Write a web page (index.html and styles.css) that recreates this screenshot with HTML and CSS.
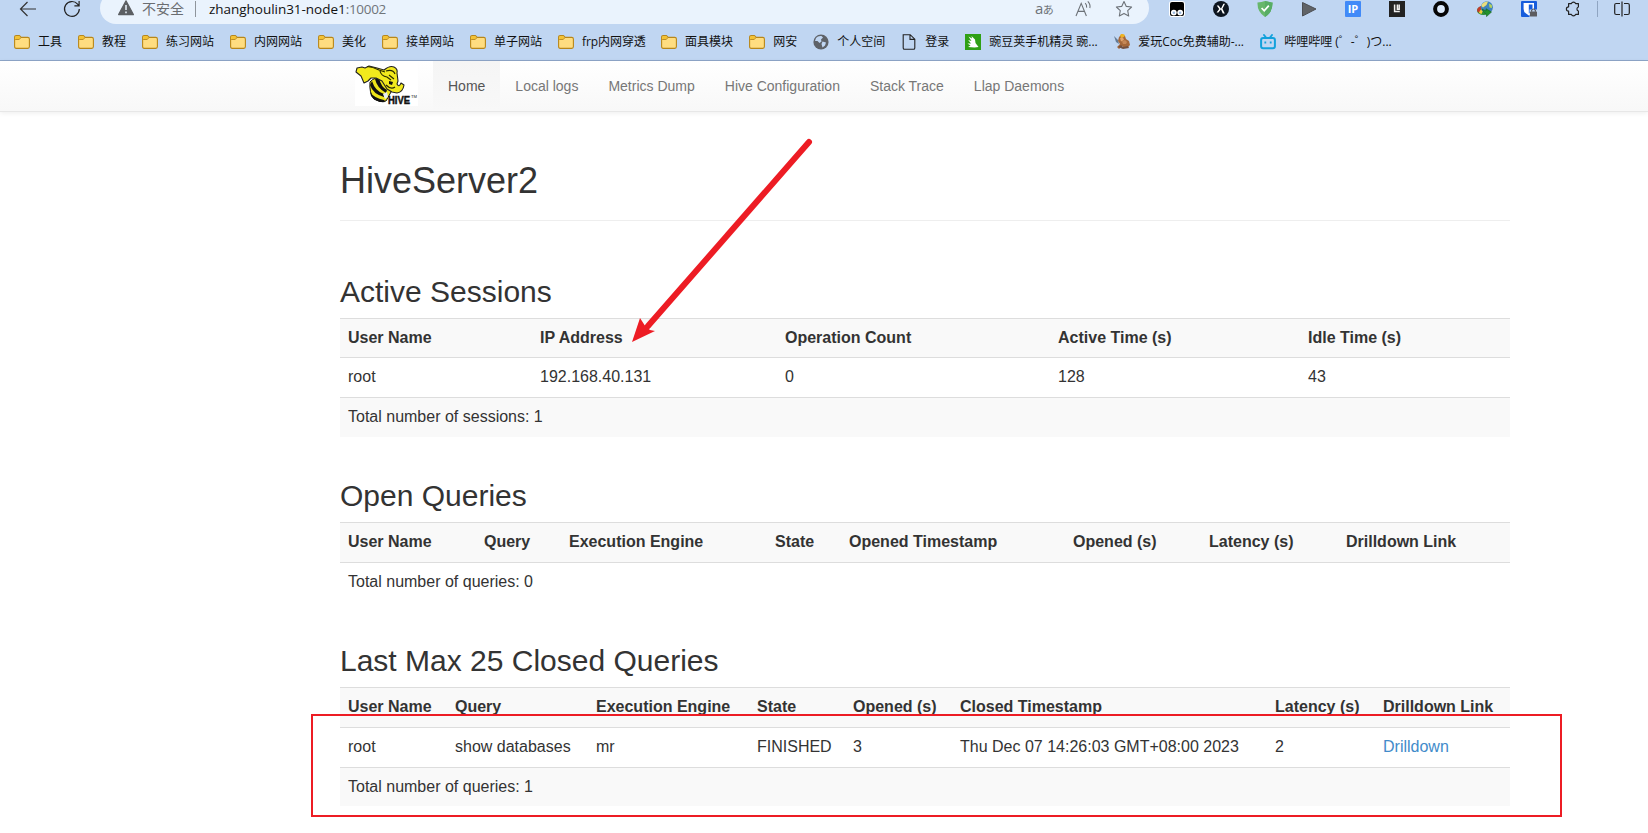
FILE: index.html
```html
<!DOCTYPE html>
<html lang="zh-CN">
<head>
<meta charset="utf-8">
<title>HiveServer2</title>
<link rel="stylesheet" href="styles.css">
</head>
<body>
<svg class="defs" width="0" height="0" aria-hidden="true">
  <symbol id="folder" viewBox="0 0 16 16">
    <path d="M.6 3.2Q.6 1.6 2.2 1.6H5.4L7.2 3.4H13.8Q15.4 3.4 15.4 5V12.6Q15.4 14.4 13.8 14.4H2.2Q.6 14.4 .6 12.6Z" fill="#ffdd80" stroke="#b8871a" stroke-width="1.1"/>
    <path d="M1.2 5.3V3.2Q1.2 2.2 2.2 2.2H5.2L6.6 3.6 5 5.3Z" fill="#f4c22f"/>
    <path d="M1.2 5.5H5L7 3.7" fill="none" stroke="#b8871a" stroke-width=".9"/>
  </symbol>
</svg>

<header class="browser">
  <div class="toolbar">
    <svg class="back" width="18" height="18" viewBox="0 0 18 18"><path d="M17 9H1.5M8.5 2L1.5 9l7 7" fill="none" stroke="#333" stroke-width="1.2"/></svg>
    <svg class="reload" width="18" height="18" viewBox="0 0 18 18"><path d="M16.3 9A7.4 7.4 0 1 1 14.6 4.2L16 5.8M16.1 1V5.9H11.4" fill="none" stroke="#222" stroke-width="1.2"/></svg>
    <div class="address">
      <svg class="warn" width="16" height="16" viewBox="0 0 16 16"><path d="M8 .8L15.4 14.6H.6Z" fill="#5c5f63" stroke="#5c5f63" stroke-width="1.2" stroke-linejoin="round"/><path d="M8 5V10M8 11.5V13.2" stroke="#eaf3fd" stroke-width="1.5"/></svg>
      <span class="insecure">不安全</span>
      <span class="divider"></span>
      <span class="url">zhanghoulin31-node1<span class="port">:10002</span></span>
      <span class="translate">a<small>あ</small></span>
      <svg class="read" width="18" height="18" viewBox="0 0 18 18"><path d="M1 16L6.2 3.4 11.4 16M3 11.4H9.5M10.2 3.2Q12 5 11.6 7.6M12.8 1.4Q15.8 4.4 14.8 8" fill="none" stroke="#6d7278" stroke-width="1.1"/></svg>
      <svg class="star" width="18" height="18" viewBox="0 0 18 18"><path d="M9 1.5L11.3 6.4 16.6 7 12.7 10.7 13.7 16 9 13.4 4.3 16 5.3 10.7 1.4 7 6.7 6.4Z" fill="none" stroke="#6d7278" stroke-width="1.1" stroke-linejoin="round"/></svg>
    </div>
    <div class="extensions">
      <svg width="16" height="16" viewBox="0 0 16 16"><rect width="16" height="16" rx="3" fill="#fff"/><path d="M1 3Q1 1 3 1H13Q15 1 15 3V11H1Z" fill="#000"/><rect x="1" y="9" width="14" height="6" rx="2" fill="#000"/><circle cx="4.8" cy="11.6" r="2.9" fill="#fff"/><circle cx="11.2" cy="11.6" r="2.9" fill="#fff"/><circle cx="4.9" cy="11.8" r="1.3" fill="#9dbbe0"/><circle cx="11.1" cy="11.8" r="1.3" fill="#9dbbe0"/></svg>
      <svg width="16" height="16" viewBox="0 0 16 16"><circle cx="8" cy="8" r="8" fill="#0d151f"/><path d="M3.8 4.5H5.6L8.2 8 5.4 11.6H3.6L6.2 8Z" fill="#fff"/><path d="M10.4 2.8H12L9.4 7.8 11.8 12.6H9.8L7.8 8Z" fill="#fff"/></svg>
      <svg width="16" height="16" viewBox="0 0 16 16"><path d="M8 0Q11.5 1 15.5 1.5Q16 11 8 16Q0 11 .5 1.5Q4.5 1 8 0Z" fill="#67b76b"/><path d="M8 0Q11.5 1 15.5 1.5Q16 11 8 16Z" fill="#58ad65"/><path d="M4.6 7L7.2 9.8 11.8 4.6" fill="none" stroke="#fff" stroke-width="1.7"/></svg>
      <svg width="16" height="16" viewBox="0 0 16 16"><path d="M1.5 1.5L15 8 1.5 15Z" fill="#606367" stroke="#4c4f54"/></svg>
      <svg width="16" height="16" viewBox="0 0 16 16"><rect width="16" height="16" rx="1" fill="#418af8"/><text class="ip-text" x="8" y="12.2" text-anchor="middle">IP</text></svg>
      <svg width="16" height="16" viewBox="0 0 16 16"><rect width="16" height="16" fill="#222"/><path d="M5.6 3.4V10.6H10.8M8.4 3.4V8.2H10.2V3.4" fill="none" stroke="#eee" stroke-width="1.5"/></svg>
      <svg width="16" height="16" viewBox="0 0 16 16"><circle cx="8" cy="8" r="5.9" fill="#dceafb" stroke="#050505" stroke-width="4"/></svg>
      <svg width="16" height="16" viewBox="0 0 16 16"><ellipse cx="6.5" cy="9.5" rx="6.5" ry="4.5" fill="#2f8f35"/><path d="M0 9Q1 5 6 5L6 8Q3 8 2.5 12Q0 11 0 9Z" fill="#c23c2c"/><path d="M2 12Q2.5 8 7 7.5L7 10Q5 10.5 4.5 13Z" fill="#f0cf35"/><circle cx="9.9" cy="6.3" r="6" fill="#3f83bd"/><path d="M5 3Q7.5 0 11 .6L9.5 4 6 6.5 4.3 5Z" fill="#e9dc7b"/><path d="M12 2.5L14.8 4 15 7 12.5 6.5Z" fill="#b7d25b"/><path d="M5 8L9 10V7.8L14.5 11 9.5 15.6V13.4Q6.5 12 5 8Z" fill="#22912c" stroke="#14611c" stroke-width=".6"/></svg>
      <svg width="16" height="16" viewBox="0 0 16 16"><rect width="16" height="16" rx="1" fill="#175ddc"/><path d="M2.6 2H13V8Q13 12 7.8 14.5Q2.6 12 2.6 8Z" fill="#fff"/><path d="M7.8 3.5H11.5V8Q11.5 11 7.8 12.6Z" fill="#175ddc"/><rect x="8.5" y="8.5" width="7.5" height="7.5" fill="#c0d6f2"/><rect x="9" y="10.5" width="7" height="5" rx=".6" fill="#5c5c60"/><path d="M10.6 10.8V9.4Q12.5 6.6 14.4 9.4V10.8" fill="none" stroke="#5c5c60" stroke-width="1.2"/></svg>
      <svg width="16" height="16" viewBox="0 0 16 16"><path d="M3.6 2.6H6.4A2.2 2.2 0 0 1 10.6 2.6H13.4V6A2.1 2.1 0 0 0 13.4 10V13.4H10.6A2.2 2.2 0 0 1 6.4 13.4H3.6V10.2A2.2 2.2 0 0 1 3.6 5.8Z" fill="none" stroke="#222" stroke-width="1.2" stroke-linejoin="round"/></svg>
      <span class="divider ext-divider"></span>
      <svg width="16" height="16" viewBox="0 0 16 16"><path d="M6 2.5H2.2Q.7 2.5 .7 4V12Q.7 13.5 2.2 13.5H6M10 2.5H13.8Q15.3 2.5 15.3 4V12Q15.3 13.5 13.8 13.5H10M8 .5V15.5" fill="none" stroke="#222" stroke-width="1.2"/></svg>
    </div>
  </div>
  <nav class="bookmarks">
    <span class="bm"><svg><use href="#folder"/></svg>工具</span>
    <span class="bm"><svg><use href="#folder"/></svg>教程</span>
    <span class="bm"><svg><use href="#folder"/></svg>练习网站</span>
    <span class="bm"><svg><use href="#folder"/></svg>内网网站</span>
    <span class="bm"><svg><use href="#folder"/></svg>美化</span>
    <span class="bm"><svg><use href="#folder"/></svg>接单网站</span>
    <span class="bm"><svg><use href="#folder"/></svg>单子网站</span>
    <span class="bm bm-frp"><svg><use href="#folder"/></svg>frp内网穿透</span>
    <span class="bm"><svg><use href="#folder"/></svg>面具模块</span>
    <span class="bm"><svg><use href="#folder"/></svg>网安</span>
    <span class="bm"><svg viewBox="0 0 16 16"><circle cx="8" cy="8" r="7.6" fill="#5e6268"/><path d="M3 4Q5 1.5 8.5 2L10 3.5 8 5.5 8.5 7.5 6.5 9 4.5 7 2 7ZM9.5 7.5L13 8.5 12 11.5 9.5 13.5 8.5 10Z" fill="#c0d6f2"/></svg>个人空间</span>
    <span class="bm"><svg viewBox="0 0 16 16"><path d="M2.2 .7H9.2L13.8 5.2V14Q13.8 15.3 12.5 15.3H3.5Q2.2 15.3 2.2 14ZM9 .8V5.4H13.7" fill="none" stroke="#222" stroke-width="1.1"/></svg>登录</span>
    <span class="bm bm-pea"><svg viewBox="0 0 16 16"><rect width="16" height="16" fill="#2fa015"/><path d="M3.5 2.5L7 4.5 6.5 2 10 5.5 10.5 9 13.5 13 9.5 13.5 3 13 5.5 11.5 2.5 9.5 6 9.5 3.2 6 6.5 7Z" fill="#fff"/></svg>豌豆荚手机精灵 豌...</span>
    <span class="bm bm-coc"><svg viewBox="0 0 16 16"><path d="M0 2L4 6 5 10 2 8Z" fill="#647b94"/><path d="M5 3L8 0 11 2 12 5 15 7 16 11 13 14H10L8 12 5 15 3 13 6 10 4 7Z" fill="#a56739"/><path d="M6 1L8-.5 11 1 10 3 7 4Z" fill="#eeb323"/><path d="M6 4L9 3.5 10 6 7 7.5Z" fill="#e1a36d"/><path d="M8 7.5L11 6 13 8 12 10 9 10Z" fill="#c58756"/><path d="M4 13L7 11 9 13 14 12 15 14 9 15Z" fill="#74503f"/></svg>爱玩Coc免费辅助-...</span>
    <span class="bm bm-bili"><svg viewBox="0 0 16 16"><rect x="1.1" y="4" width="13.8" height="10.3" rx="2" fill="none" stroke="#12a1dc" stroke-width="2"/><path d="M4 1L6 3.5M12 1L10 3.5" stroke="#12a1dc" stroke-width="1.9" stroke-linecap="round"/><path d="M5.3 7.5V9.6M10.7 7.5V9.6" stroke="#12a1dc" stroke-width="1.8"/></svg>哔哩哔哩 (゜-゜)つ...</span>
  </nav>
</header>

<nav class="navbar">
  <div class="nav-inner">
    <svg class="logo" width="63" height="45" viewBox="0 0 63 45">
      <rect width="63" height="45" fill="#fff"/>
      <path d="M15 21Q20 15 27 18L35 23 36 31 31 40Q25 42 19 38 14 32 15 21Z" fill="#eee51a" stroke="#111"/>
      <path d="M15 24Q18 33 29 36L29 33Q20 30 17 20ZM20 18Q22 27 31 32L32 29Q26 26 24 17ZM28 18Q29 24 35 27L36 23ZM15 31Q19 37 29 39L30 41Q21 42 16 35Z" fill="#111"/>
      <path d="M1 11L2 7 7 6 10 7 14 5 22 7 29 9Q35 4 39 6Q43 8 42 12L43 20 42 23Q44 27 46 22L49 24Q48 31 42 32L37 31 32 28 27 20 21 17 16 17 13 20 9 22 6 15Z" fill="#f2e91d" stroke="#222" stroke-width="1.1" stroke-linejoin="round"/>
      <path d="M12 5.5Q18 6 24 9L30 11M25 10Q26 15 32 16L36 19M31 10Q38 8 40 13M34 14L39 18M31 24Q36 29 40 26" fill="none" stroke="#292900" stroke-width="1.2"/>
      <path d="M34 20L38 21 37 24 34 23Z" fill="#111"/>
      <path d="M28 33L32 31 33 36 30 38Z" fill="#e8eef5"/>
      <text class="hive-text" x="33" y="42.5" textLength="22" lengthAdjust="spacingAndGlyphs">HIVE</text>
      <text class="tm-text" x="56" y="37" textLength="6" lengthAdjust="spacingAndGlyphs">TM</text>
    </svg>
    <a class="active">Home</a>
    <a>Local logs</a>
    <a>Metrics Dump</a>
    <a>Hive Configuration</a>
    <a>Stack Trace</a>
    <a>Llap Daemons</a>
  </div>
</nav>

<main class="container">
  <h1>HiveServer2</h1>
  <section class="sessions">
    <h2>Active Sessions</h2>
    <table>
      <colgroup><col class="w192"><col class="w245"><col class="w273"><col class="w250"><col></colgroup>
      <tr class="short"><th>User Name</th><th>IP Address</th><th>Operation Count</th><th>Active Time (s)</th><th>Idle Time (s)</th></tr>
      <tr><td>root</td><td>192.168.40.131</td><td>0</td><td>128</td><td>43</td></tr>
      <tr><td colspan="5">Total number of sessions: 1</td></tr>
    </table>
  </section>
  <section class="open-queries">
    <h2>Open Queries</h2>
    <table>
      <colgroup><col class="w136"><col class="w85"><col class="w206"><col class="w74"><col class="w224"><col class="w136"><col class="w137"><col></colgroup>
      <tr><th>User Name</th><th>Query</th><th>Execution Engine</th><th>State</th><th>Opened Timestamp</th><th>Opened (s)</th><th>Latency (s)</th><th>Drilldown Link</th></tr>
      <tr><td colspan="8">Total number of queries: 0</td></tr>
    </table>
  </section>
  <section class="closed-queries">
    <h2>Last Max 25 Closed Queries</h2>
    <table>
      <colgroup><col class="w107"><col class="w141"><col class="w161"><col class="w96"><col class="w107"><col class="w315"><col class="w108"><col></colgroup>
      <tr><th>User Name</th><th>Query</th><th>Execution Engine</th><th>State</th><th>Opened (s)</th><th>Closed Timestamp</th><th>Latency (s)</th><th>Drilldown Link</th></tr>
      <tr><td>root</td><td>show databases</td><td>mr</td><td>FINISHED</td><td>3</td><td>Thu Dec 07 14:26:03 GMT+08:00 2023</td><td>2</td><td><a class="link">Drilldown</a></td></tr>
      <tr class="short"><td colspan="8">Total number of queries: 1</td></tr>
    </table>
  </section>
</main>

<svg class="arrow" width="190" height="214" viewBox="0 0 190 214">
  <path d="M179 12L18 196" stroke="#ed1c24" stroke-width="6" stroke-linecap="round"/>
  <path d="M2 212L10 188 14.5 195 20 200 25 201Z" fill="#ed1c24"/>
</svg>
<div class="highlight"></div>
</body>
</html>
```
FILE: styles.css
```css
* { box-sizing: border-box; }
body {
  margin: 0;
  height: 833px;
  position: relative;
  overflow: hidden;
  background: #fff;
  color: #333;
  font: 16px/23px "Liberation Sans", Arial, sans-serif;
}
.defs { display: none; }

/* browser chrome */
.browser {
  height: 61px;
  overflow: hidden;
  background: #c0d6f2;
  border-bottom: 1px solid #8ea6c8;
  font-family: "Open Sans", "Noto Sans CJK SC", sans-serif;
}
.toolbar {
  display: flex;
  align-items: center;
  height: 32px;
  margin-top: -8px;
  padding-left: 19px;
}
.toolbar svg, .toolbar span { flex: none; }
.back { margin-top: 2px; }
.reload { margin: 2px 0 0 26px; }
.address {
  display: flex;
  align-items: center;
  width: 1049px;
  height: 32px;
  margin-left: 19px;
  padding: 2px 16px 0 18px;
  border-radius: 16px;
  background: #eaf3fd;
  font-size: 14px;
  white-space: nowrap;
}
.warn { margin-top: -2px; }
.insecure { width: 42px; margin: -1px 0 0 8px; color: #6a6d71; font-family: "Noto Sans CJK SC", sans-serif; }
.divider { width: 1px; height: 16px; background: #8f959c; }
.address .divider { margin: 0 13px 0 11px; }
.toolbar .url { flex: 1 0 0; color: #111; font-size: 13.5px; letter-spacing: -.03px; }
.port { color: #70757a; letter-spacing: -.3px; }
.translate { width: 20px; margin: -1px 20px 0 0; color: #6d7278; font-size: 15px; letter-spacing: -.5px; }
.translate small { font-size: 11px; }
.read { margin-right: 22px; }
.extensions { display: flex; align-items: center; gap: 28px; margin: 2px 0 0 20px; }
.ext-divider { margin: 0 -12px; background: #8fa5c2; }
.ip-text { fill: #fff; font: bold 11px "Open Sans", sans-serif; }
.bookmarks { display: flex; gap: 16px; height: 36px; padding-left: 14px; }
.bm { display: flex; align-items: center; gap: 8px; flex: none; height: 35px; color: #111; font-size: 12px; white-space: nowrap; }
.bm svg { width: 16px; height: 16px; flex: none; position: relative; top: .5px; }
.bm-frp { width: 87px; letter-spacing: -.1px; }
.bm-pea { width: 133px; }
.bm-coc { width: 130px; }

/* page navigation */
.navbar {
  height: 51px;
  background: linear-gradient(#fff, #f8f8f8);
  border-bottom: 1px solid #e7e7e7;
  box-shadow: 0 1px 5px rgba(0, 0, 0, .075);
}
.nav-inner { display: flex; padding-left: 355px; }
.logo { flex: none; margin-right: 15px; }
.hive-text { font: bold 11px "Liberation Sans", sans-serif; fill: #111; stroke: #111; stroke-width: .5px; }
.tm-text { font: 4px "Liberation Sans", sans-serif; fill: #222; }
.nav-inner a { height: 50px; padding: 15px; color: #777; font-size: 14px; line-height: 20px; }
.nav-inner .active {
  color: #555;
  background: linear-gradient(#f5f5f5, #f8f8f8);
}

/* page content */
.container { width: 1170px; margin-left: 340px; }
h1, h2 { margin: 0; font-weight: 400; }
h1 { height: 109px; padding-top: 49px; border-bottom: 1px solid #eee; font-size: 36px; line-height: 40px; }
h2 { padding-bottom: 10px; font-size: 30px; line-height: 33px; }
.sessions { padding-top: 54px; }
.open-queries { padding-top: 42px; }
.closed-queries { padding-top: 42px; }
table { width: 100%; border-collapse: separate; border-spacing: 0; table-layout: fixed; }
tr { height: 40px; }
.short { height: 39px; }
th, td { padding: 7px 8px 8px; border-top: 1px solid #ddd; text-align: left; vertical-align: top; white-space: nowrap; }
tr:nth-child(odd) { background: #f9f9f9; }
.link { color: #428bca; }
.w74 { width: 74px; }
.w85 { width: 85px; }
.w96 { width: 96px; }
.w107 { width: 107px; }
.w108 { width: 108px; }
.w136 { width: 136px; }
.w137 { width: 137px; }
.w141 { width: 141px; }
.w161 { width: 161px; }
.w192 { width: 192px; }
.w206 { width: 206px; }
.w224 { width: 224px; }
.w245 { width: 245px; }
.w250 { width: 250px; }
.w273 { width: 273px; }
.w315 { width: 315px; }

/* annotations over the page */
.arrow { position: absolute; left: 630px; top: 130px; }
.highlight { position: absolute; left: 311px; top: 714px; width: 1251px; height: 103px; border: 2px solid #ed1c24; }
```
